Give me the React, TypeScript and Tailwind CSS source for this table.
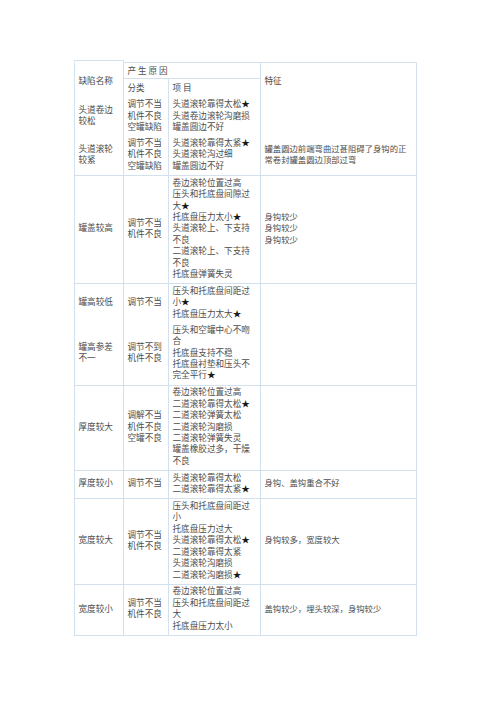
import React from 'react'

type Row = {
  name: string[]
  kind: string[]
  items: string[]
  feat: string[]
  top: boolean
}

const rows: Row[] = [
  {
    name: ['头道卷边', '较松'],
    kind: ['调节不当', '机件不良', '空罐缺陷'],
    items: ['头道滚轮靠得太松★', '头道卷边滚轮沟磨损', '罐盖圆边不好'],
    feat: [],
    top: false,
  },
  {
    name: ['头道滚轮', '较紧'],
    kind: ['调节不当', '机件不良', '空罐缺陷'],
    items: ['头道滚轮靠得太紧★', '头道滚轮沟过细', '罐盖圆边不好'],
    feat: ['罐盖圆边前端弯曲过甚阻碍了身钩的正', '常卷封罐盖圆边顶部过弯'],
    top: false,
  },
  {
    name: ['罐盖较高'],
    kind: ['调节不当', '机件不良'],
    items: [
      '卷边滚轮位置过高',
      '压头和托底盘间隙过',
      '大★',
      '托底盘压力太小★',
      '头道滚轮上、下支持',
      '不良',
      '二道滚轮上、下支持',
      '不良',
      '托底盘弹簧失灵',
    ],
    feat: ['身钩较少', '身钩较少', '身钩较少'],
    top: true,
  },
  {
    name: ['罐高较低'],
    kind: ['调节不当'],
    items: ['压头和托底盘间距过', '小★', '托底盘压力太大★'],
    feat: [],
    top: true,
  },
  {
    name: ['罐高参差', '不一'],
    kind: ['调节不到', '机件不良'],
    items: ['压头和空罐中心不吻', '合', '托底盘支持不稳', '托底盘衬垫和压头不', '完全平行★'],
    feat: [],
    top: false,
  },
  {
    name: ['厚度较大'],
    kind: ['调解不当', '机件不良', '空罐不良'],
    items: [
      '卷边滚轮位置过高',
      '二道滚轮靠得太松★',
      '二道滚轮弹簧太松',
      '二道滚轮沟磨损',
      '二道滚轮弹簧失灵',
      '罐盖橡胶过多，干燥',
      '不良',
    ],
    feat: [],
    top: true,
  },
  {
    name: ['厚度较小'],
    kind: ['调节不当'],
    items: ['头道滚轮靠得太松', '二道滚轮靠得太紧★'],
    feat: ['身钩、盖钩重合不好'],
    top: true,
  },
  {
    name: ['宽度较大'],
    kind: ['调节不当', '机件不良'],
    items: [
      '压头和托底盘间距过',
      '小',
      '托底盘压力过大',
      '头道滚轮靠得太松★',
      '二道滚轮靠得太紧',
      '头道滚轮沟磨损',
      '二道滚轮沟磨损★',
    ],
    feat: ['身钩较多，宽度较大'],
    top: true,
  },
  {
    name: ['宽度较小'],
    kind: ['调节不当', '机件不良'],
    items: ['卷边滚轮位置过高', '压头和托底盘间距过', '大', '托底盘压力太小'],
    feat: ['盖钩较少，埋头较深，身钩较少'],
    top: true,
  },
]

// a star gets drawn darker than the rest of the line
function Line({ text }: { text: string }) {
  const parts = text.split('★')
  return (
    <div className="h-[11.46px] leading-[11.46px]">
      {parts.map((p, i) => (
        <React.Fragment key={i}>
          {p}
          {i < parts.length - 1 && <span className="text-[#1a1a1a]">★</span>}
        </React.Fragment>
      ))}
    </div>
  )
}

function Cell({ lines, top, last, className = '' }: { lines: string[]; top: boolean; last: boolean; className?: string }) {
  return (
    <td
      className={`border-l border-r border-[#d3e0ee] ${top ? 'border-t' : ''} ${last ? 'border-b' : ''} align-middle px-[3.5px] pt-[0.5px] pb-[3.8px] whitespace-nowrap ${className}`}
    >
      {lines.map((l, i) => (
        <Line key={i} text={l} />
      ))}
    </td>
  )
}

export default function App() {
  return (
    <div className="min-h-[702px] w-[496px] bg-white pl-[74px] pt-[60px] font-['Noto_Sans_CJK_SC','Noto_Sans',sans-serif] text-[8.6px] text-[#4d4d4d]">
      <div className="h-[2px] w-[50px] border-l border-r border-t border-[#d3e0ee]" />
      <table className="w-[342px] table-fixed border-collapse">
        <colgroup>
          <col className="w-[49px]" />
          <col className="w-[45px]" />
          <col className="w-[92px]" />
          <col className="w-[156px]" />
        </colgroup>
        <tbody>
          <tr>
            <td rowSpan={2} className="border-l border-r border-[#d3e0ee] align-middle px-[3.5px] whitespace-nowrap">
              缺陷名称
            </td>
            <td colSpan={2} className="border-t border-b border-r border-[#d3e0ee] px-[3.5px] pt-[1.5px] pb-[2px] leading-[11.46px] whitespace-nowrap">
              产 生 原 因
            </td>
            <td rowSpan={2} className="border-t border-r border-[#d3e0ee] align-middle px-[3.5px] whitespace-nowrap">
              特征
            </td>
          </tr>
          <tr>
            <td className="border-l border-r border-[#d3e0ee] px-[3.5px] pt-[3px] pb-[4.4px] leading-[11.46px] whitespace-nowrap">
              分类
            </td>
            <td className="border-r border-[#d3e0ee] px-[3.5px] pt-[3px] pb-[4.4px] leading-[11.46px] whitespace-nowrap">
              项 目
            </td>
          </tr>
          {rows.map((r, i) => {
            const last = i === rows.length - 1
            return (
              <tr key={i}>
                <Cell lines={r.name} top={r.top} last={last} />
                <Cell lines={r.kind} top={r.top} last={last} />
                <Cell lines={r.items} top={r.top} last={last} />
                <Cell lines={r.feat} top={r.top} last={last} className="text-[8.35px]" />
              </tr>
            )
          })}
        </tbody>
      </table>
    </div>
  )
}
